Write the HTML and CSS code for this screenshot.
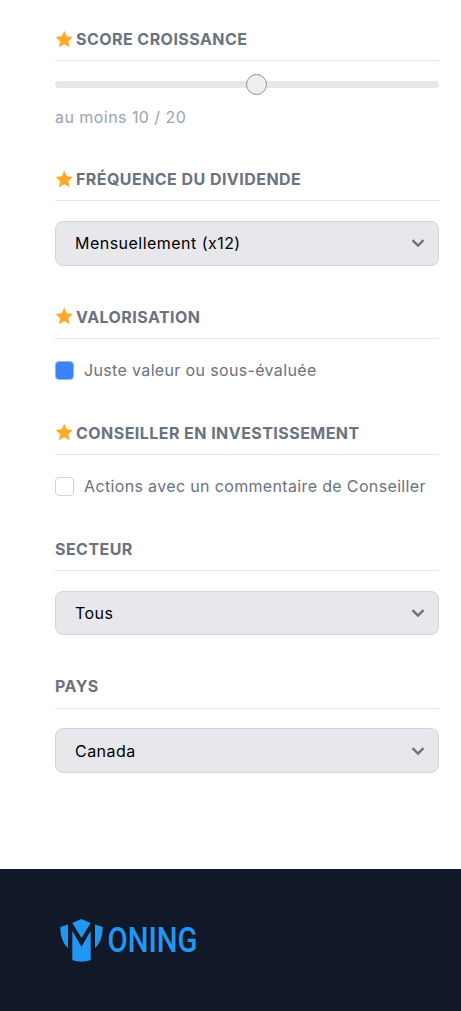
FILE: index.html
```html
<!DOCTYPE html>
<html lang="fr">
<head>
<meta charset="utf-8">
<title>Filtres</title>
<link rel="stylesheet" href="styles.css">
</head>
<body>
<main class="filters">
  <section class="group group-score">
    <h3 class="title"><svg class="star" viewBox="0 0 20 20"><path d="M10 .8l2.8 6 6.5.8-4.8 4.500 1.300 6.500-5.800-3.300-5.800 3.300 1.300-6.500L.7 7.600l6.500-.8z"/></svg>Score croissance</h3>
    <div class="slider"><div class="track"></div><div class="thumb"></div></div>
    <p class="hint">au moins 10 / 20</p>
  </section>
  <section class="group">
    <h3 class="title"><svg class="star" viewBox="0 0 20 20"><path d="M10 .8l2.8 6 6.5.8-4.8 4.500 1.300 6.500-5.800-3.300-5.800 3.300 1.300-6.500L.7 7.600l6.500-.8z"/></svg>Fréquence du dividende</h3>
    <div class="select"><span>Mensuellement (x12)</span><svg class="chev" viewBox="0 0 14 10"><path d="M1.500 2.200L7 7.500l5.500-5.300"/></svg></div>
  </section>
  <section class="group">
    <h3 class="title"><svg class="star" viewBox="0 0 20 20"><path d="M10 .8l2.8 6 6.5.8-4.8 4.500 1.300 6.500-5.800-3.300-5.800 3.300 1.300-6.500L.7 7.600l6.500-.8z"/></svg>Valorisation</h3>
    <label class="check"><span class="box box-on"></span>Juste valeur ou sous-évaluée</label>
  </section>
  <section class="group">
    <h3 class="title"><svg class="star" viewBox="0 0 20 20"><path d="M10 .8l2.8 6 6.5.8-4.8 4.500 1.300 6.500-5.800-3.300-5.800 3.300 1.300-6.500L.7 7.600l6.500-.8z"/></svg>Conseiller en investissement</h3>
    <label class="check"><span class="box"></span>Actions avec un commentaire de Conseiller</label>
  </section>
  <section class="group">
    <h3 class="title">Secteur</h3>
    <div class="select"><span>Tous</span><svg class="chev" viewBox="0 0 14 10"><path d="M1.500 2.200L7 7.500l5.500-5.300"/></svg></div>
  </section>
  <section class="group">
    <h3 class="title">Pays</h3>
    <div class="select"><span>Canada</span><svg class="chev" viewBox="0 0 14 10"><path d="M1.500 2.200L7 7.500l5.500-5.300"/></svg></div>
  </section>
</main>
<footer class="footer">
  <svg class="logo" viewBox="0 0 140 44" width="140" height="44">
    <path class="logo-m" d="M.3 8L8 5.500V29C3 24.500 .3 17.500 .3 8z"/>
    <path class="logo-m" d="M42.700 8L35 5.500V29C40 24.500 42.700 17.500 42.700 8z"/>
    <path class="logo-m" d="M12.300 4L21.500 0l9.200 4L21.500 19zM12.300 11.700L21.500 27.700l9.200-16V41C25 43.300 18 43.300 12.300 41z"/>
    <text class="logo-text" x="47.500" y="33" textLength="90" lengthAdjust="spacingAndGlyphs">ONING</text>
  </svg>
</footer>
</body>
</html>
```
FILE: styles.css
```css
* { box-sizing: border-box; }
html, body { margin: 0; padding: 0; }
body {
  background: #fff;
  font-family: Inter, "Liberation Sans", sans-serif;
  width: 461px;
  height: 1011px;
  overflow: hidden;
}
.filters {
  height: 869px;
  padding: 28.4px 22px 0 55px;
}
.group { margin-bottom: 40.3px; }
.group-score { margin-bottom: 41.3px; }
.title {
  display: flex;
  align-items: center;
  margin: 0 0 19.5px;
  height: 33px;
  padding-bottom: 11px;
  border-bottom: 1px solid #e5e7eb;
  font-size: 16px;
  line-height: 22px;
  font-weight: 700;
  letter-spacing: 0.45px;
  color: #6b7280;
  text-transform: uppercase;
}
.star { width: 18.5px; height: 18.5px; margin-right: 2.500px; fill: #ffa92b; flex: none; }
.slider { position: relative; height: 8px; margin-top: 0.3px; }
.track { height: 7px; border-radius: 4px; background: #e5e7eb; }
.thumb {
  position: absolute;
  left: 191px;
  top: -7px;
  width: 21px;
  height: 21px;
  border-radius: 50%;
  background: #efeff0;
  border: 1px solid #8f8f8f;
}
.hint {
  margin: 19.3px 0 0;
  font-size: 16px;
  line-height: 19px;
  letter-spacing: 0.45px;
  color: #9ca3af;
}
.select {
  display: flex;
  align-items: center;
  justify-content: space-between;
  height: 44.8px;
  padding: 0 13px 0 19px;
  border: 1px solid #d1d5db;
  border-radius: 8px;
  background: #e7e7ec;
  font-size: 16px;
  letter-spacing: 0.47px;
  color: #000;
}
.chev { width: 14px; height: 10px; fill: none; stroke: #6b7280; stroke-width: 2.400; }
.check {
  display: flex;
  align-items: center;
  height: 23.2px;
  font-size: 16px;
  letter-spacing: 0.35px;
  color: #6b7280;
}
.box {
  width: 19px;
  height: 19px;
  margin-right: 10px;
  border-radius: 4px;
  border: 1px solid #d1d5db;
  background: #fff;
  flex: none;
}
.box-on { background: #3b82f6; border-color: #93b8f3; }
.footer {
  height: 142px;
  padding: 50px 0 0 60px;
  background: #111827;
}
.logo { display: block; overflow: visible; }
.logo-m { fill: #2196f3; }
.logo-text {
  font-family: "Roboto", sans-serif;
  font-size: 35px;
  font-weight: 500;
  fill: #2196f3;
}
```
